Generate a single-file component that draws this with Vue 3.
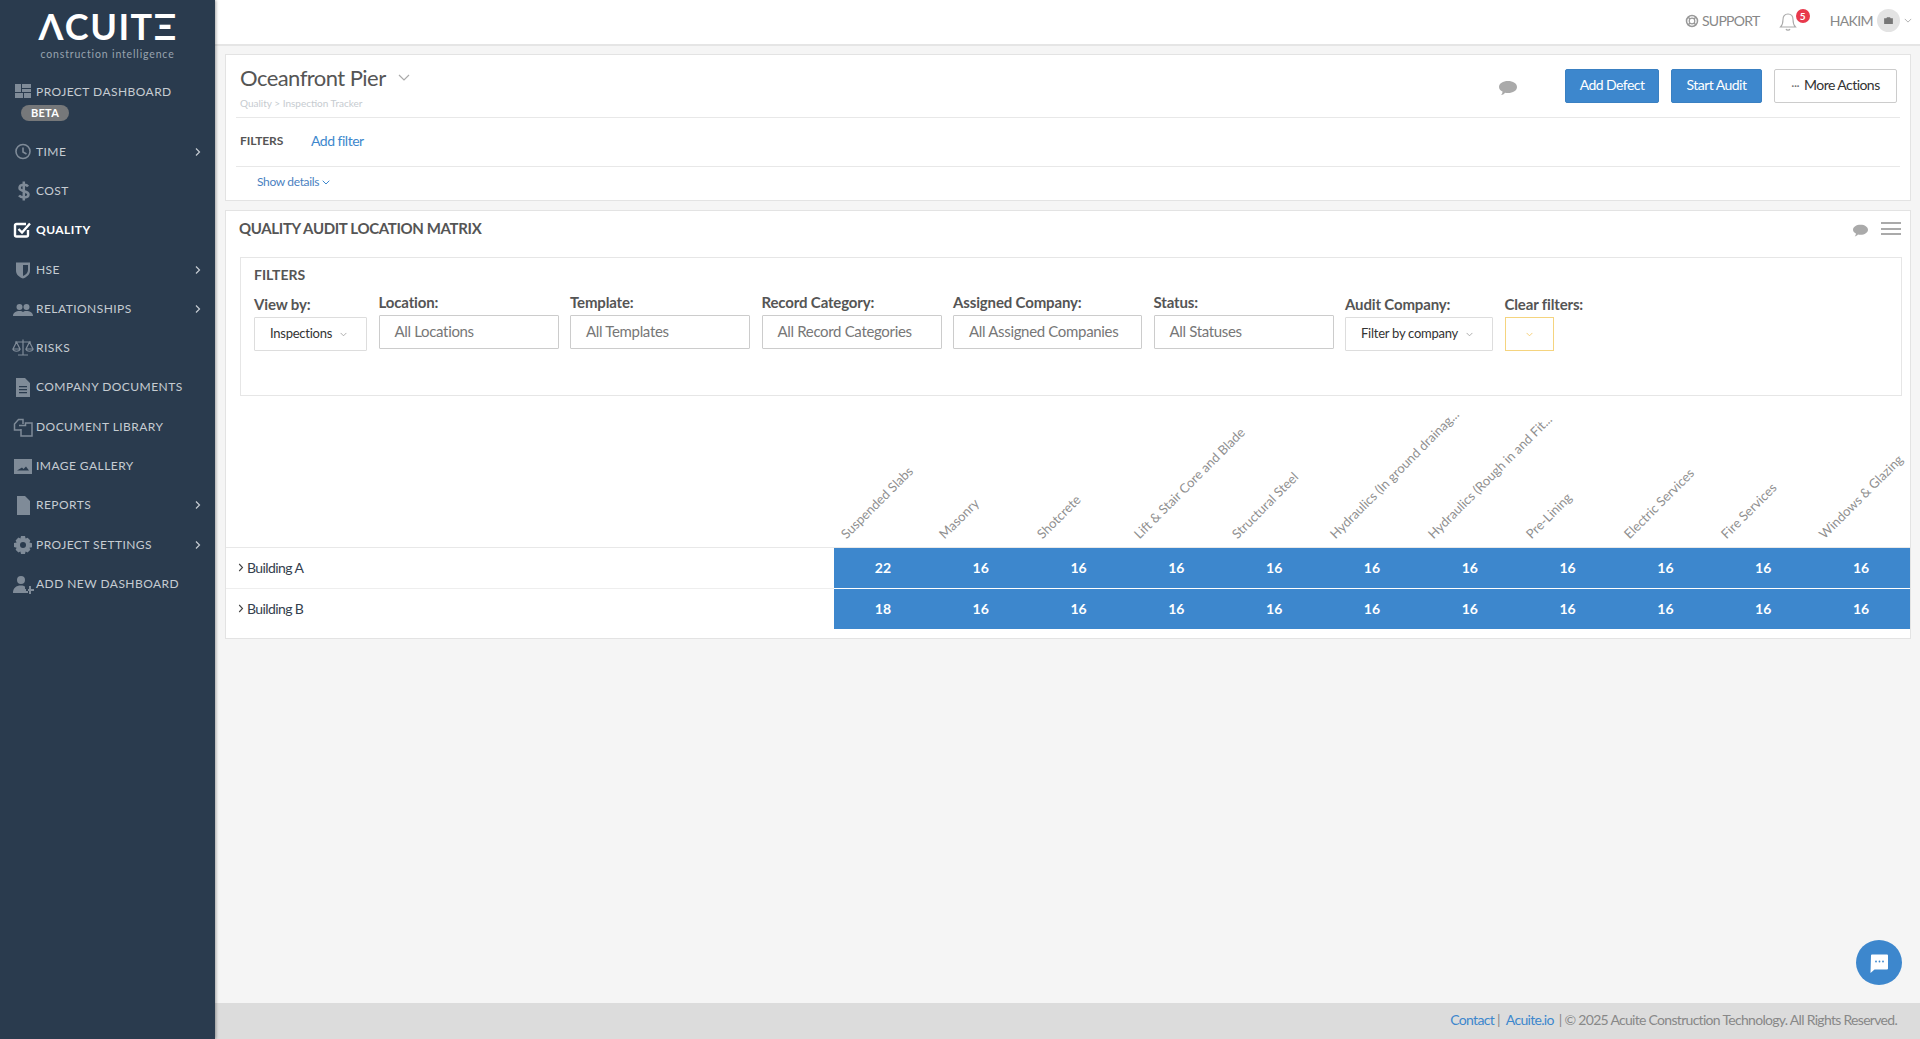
<script setup>
const nav = [
  { label: 'PROJECT DASHBOARD', icon: 'dash', beta: true },
  { label: 'TIME', icon: 'clock', arrow: true },
  { label: 'COST', icon: 'dollar' },
  { label: 'QUALITY', icon: 'check', active: true },
  { label: 'HSE', icon: 'shield', arrow: true },
  { label: 'RELATIONSHIPS', icon: 'people', arrow: true },
  { label: 'RISKS', icon: 'scale' },
  { label: 'COMPANY DOCUMENTS', icon: 'doc' },
  { label: 'DOCUMENT LIBRARY', icon: 'copy' },
  { label: 'IMAGE GALLERY', icon: 'image' },
  { label: 'REPORTS', icon: 'file', arrow: true },
  { label: 'PROJECT SETTINGS', icon: 'gear', arrow: true },
  { label: 'ADD NEW DASHBOARD', icon: 'adduser' }
]
const icons = {
  dash: { f: 'M3 3h6v8H3zM10 3h9v4h-9zM10 8h9v3h-9zM3 12h8v5H3zM12 12h7v5h-7z' },
  clock: { s: 'M11 3.500a7 7 0 1 0 0 14a7 7 0 0 0 0-14zM11 6.500V11l3.500 2', w: 1.600 },
  dollar: { s: 'M16 6.500C14.500 4 7.500 4 7.500 8c0 4 9 2.500 9 6.500c0 4-7.500 3.500-9.500 1M11.800 1.500v19', w: 2.500 },
  check: { s: 'M16 11v5a1.500 1.500 0 0 1-1.500 1.500h-10A1.500 1.500 0 0 1 3 16V6.500A1.500 1.500 0 0 1 4.500 5H14M6.500 10l3.500 3.500l8-9', w: 2.400 },
  shield: { f: 'M4 3.500h14v8c0 4-3 6.500-7 8c-4-1.500-7-4-7-8zM11 6v11c2.500-1 5-3 5-6V6z' },
  people: { f: 'M7.500 6a3 3 0 1 1 0 6a3 3 0 0 1 0-6zM14.500 6a3 3 0 1 1 0 6a3 3 0 0 1 0-6zM1 18c0-3.500 3-5 6.500-5c2 0 3 .5 3.500 1c.5-.5 1.500-1 3.500-1c3.500 0 6.500 1.500 6.500 5z' },
  scale: { s: 'M11 2.500v15M6 18h10M3 5h16M4.500 5L1 12h7zM17.500 5L14 12h7zM1 12c.5 3 6.500 3 7 0M14 12c.5 3 6.500 3 7 0', w: 1.200 },
  doc: { f: 'M4 2h9l5 5v14H4zM7 10h8v1.300H7zM7 13h8v1.300H7zM7 16h8v1.300H7z' },
  copy: { s: 'M9 14H2.500V8l4-4.500H11V8M7 9.500h6.500V7l4 0H20v13H9V13', w: 1.500 },
  image: { f: 'M2 4h18v15H2zM5 15.500h12l-3-4l-2.500 2.500l-1.500-1.500z' },
  file: { f: 'M5 2h8l5 5v14H5z' },
  gear: { f: 'M9 2h4l.6 2.600l2-.8l2.800 2.800l-1 2l2.600.6v4l-2.600.6l1 2l-2.800 2.800l-2-1L13 20H9l-.6-2.400l-2 1L3.600 15.800l1-2L2 13V9l2.600-.6l-1-2L6.400 3.600l2 .8zM11 8a3 3 0 1 0 0 6a3 3 0 0 0 0-6z' },
  adduser: { f: 'M9 3a4 4 0 1 1 0 8a4 4 0 0 1 0-8zM1 20c0-5 3-7.500 8-7.500c2 0 3 .5 4 1v2.500h3v4zM17 13h2v3h3v2h-3v3h-2v-3h-3v-2h3z' }
}
const filters = [
  { label: 'View by:', value: 'Inspections', kind: 'select', width: 113 },
  { label: 'Location:', value: 'All Locations', kind: 'input', width: 180 },
  { label: 'Template:', value: 'All Templates', kind: 'input', width: 180 },
  { label: 'Record Category:', value: 'All Record Categories', kind: 'input', width: 180 },
  { label: 'Assigned Company:', value: 'All Assigned Companies', kind: 'input', width: 189 },
  { label: 'Status:', value: 'All Statuses', kind: 'input', width: 180 },
  { label: 'Audit Company:', value: 'Filter by company', kind: 'select', width: 148 },
  { label: 'Clear filters:', value: '', kind: 'clear', width: 49 }
]
const columns = ['Suspended Slabs', 'Masonry', 'Shotcrete', 'Lift & Stair Core and Blade', 'Structural Steel', 'Hydraulics (In ground drainag...', 'Hydraulics (Rough in and Fit...', 'Pre-Lining', 'Electric Services', 'Fire Services', 'Windows & Glazing']
const rows = [
  { name: 'Building A', values: [22, 16, 16, 16, 16, 16, 16, 16, 16, 16, 16] },
  { name: 'Building B', values: [18, 16, 16, 16, 16, 16, 16, 16, 16, 16, 16] }
]
</script>

<template>
  <div class="app">
    <aside class="sidebar">
      <div class="logo">
        <div class="logo-word" aria-label="ACUITE">ΛCUITΞ</div>
        <div class="logo-sub">construction intelligence</div>
      </div>
      <nav class="nav">
        <div v-for="item in nav" :key="item.label" class="nav-item" :class="{ active: item.active, tall: item.beta }">
          <div class="nav-line">
            <svg class="nav-icon" viewBox="0 0 22 22">
              <path v-if="icons[item.icon].f" :d="icons[item.icon].f" fill="currentColor" fill-rule="evenodd" />
              <path v-if="icons[item.icon].s" :d="icons[item.icon].s" fill="none" stroke="currentColor" :stroke-width="icons[item.icon].w || 2" />
            </svg>
            <span class="nav-label">{{ item.label }}</span>
            <svg v-if="item.arrow" class="nav-arrow" viewBox="0 0 8 10"><path d="M2 1.500l3.500 3.500l-3.500 3.500" fill="none" stroke="currentColor" stroke-width="1.200" /></svg>
          </div>
          <span v-if="item.beta" class="beta">BETA</span>
        </div>
      </nav>
    </aside>

    <div class="main">
      <header class="topbar">
        <span class="top-link">
          <svg class="top-icon" viewBox="0 0 14 14"><circle cx="7" cy="7" r="5.500" fill="none" stroke="#999" stroke-width="1.500" /><circle cx="7" cy="7" r="2.800" fill="none" stroke="#999" stroke-width="1.200" /><path d="M3 3l2 2M11 3L9 5M3 11l2-2M11 11L9 9" stroke="#999" stroke-width="1.500" /></svg>
          SUPPORT
        </span>
        <span class="bell-wrap">
          <svg class="bell" viewBox="0 0 18 20"><path d="M9 2c-3.500 0-5 2.500-5 5.500c0 4-1 6-2.500 7.500h15c-1.500-1.500-2.500-3.500-2.500-7.500C14 4.500 12.500 2 9 2zM7 17c.5 1.500 3.500 1.500 4 0" fill="none" stroke="#aaa" stroke-width="1.100" /></svg>
          <span class="badge">5</span>
        </span>
        <span class="user">HAKIM</span>
        <span class="avatar">
          <svg viewBox="0 0 10 8" width="9" height="7"><path d="M0 1.500h2.500L3.300.300h3.400l.8 1.200H10V8H0z" fill="#777" /></svg>
        </span>
        <svg class="user-caret" viewBox="0 0 10 6"><path d="M1 1l4 4l4-4" fill="none" stroke="#aaa" stroke-width="1.100" /></svg>
      </header>

      <main class="content">
        <section class="panel head-panel">
          <div class="title-row">
            <div class="title-text">
              <div class="title-line">
                <h1>Oceanfront Pier</h1>
                <svg class="title-caret" viewBox="0 0 12 7"><path d="M1 1l5 5l5-5" fill="none" stroke="#aaa" stroke-width="1.200" /></svg>
              </div>
              <div class="crumbs">Quality &gt; Inspection Tracker</div>
            </div>
            <div class="actions">
              <svg class="bubble" viewBox="0 0 18 14"><path d="M9 0c5 0 9 2.500 9 6s-4 6-9 6c-1 0-2-.1-3-.3C5 13 3.500 14 2 14c1-1 1.500-2 1.500-3.500C1.500 9.500 0 8 0 6c0-3.500 4-6 9-6z" fill="#aaa" /></svg>
              <button class="btn primary add">Add Defect</button>
              <button class="btn primary start">Start Audit</button>
              <button class="btn ghost"><span class="dots">···</span>More Actions</button>
            </div>
          </div>
          <div class="filter-row">
            <span class="filter-title">FILTERS</span>
            <a class="add-filter">Add filter</a>
          </div>
          <div class="details-row">
            <a class="details">Show details
              <svg class="details-caret" viewBox="0 0 8 5"><path d="M.700.700L4 4l3.300-3.300" fill="none" stroke="#3d87cd" stroke-width="1" /></svg>
            </a>
          </div>
        </section>

        <section class="panel matrix-panel">
          <div class="matrix-head">
            <h2>QUALITY AUDIT LOCATION MATRIX</h2>
            <div class="matrix-tools">
              <svg class="bubble small" viewBox="0 0 18 14"><path d="M9 0c5 0 9 2.500 9 6s-4 6-9 6c-1 0-2-.1-3-.3C5 13 3.500 14 2 14c1-1 1.500-2 1.500-3.500C1.500 9.500 0 8 0 6c0-3.500 4-6 9-6z" fill="#aaa" /></svg>
              <div class="hamburger"><i></i><i></i><i></i></div>
            </div>
          </div>

          <div class="filter-box">
            <div class="filter-box-title">FILTERS</div>
            <div class="filter-grid">
              <div v-for="f in filters" :key="f.label" class="field" :class="'field-' + f.kind" :style="{ width: f.width + 'px' }">
                <label>{{ f.label }}</label>
                <div v-if="f.kind === 'input'" class="input">{{ f.value }}</div>
                <div v-else-if="f.kind === 'select'" class="select">
                  {{ f.value }}
                  <svg class="select-caret" viewBox="0 0 8 5"><path d="M.700.700L4 4l3.300-3.300" fill="none" stroke="#999" stroke-width=".9" /></svg>
                </div>
                <div v-else class="clear">
                  <svg class="select-caret" viewBox="0 0 8 5"><path d="M.700.700L4 4l3.300-3.300" fill="none" stroke="#f4c65c" stroke-width=".9" /></svg>
                </div>
              </div>
            </div>
          </div>

          <div class="matrix">
            <div class="m-row m-header">
              <div class="m-name"></div>
              <div class="m-cells">
                <div v-for="c in columns" :key="c" class="m-col"><span class="m-rot">{{ c }}</span></div>
              </div>
            </div>
            <div v-for="r in rows" :key="r.name" class="m-row m-body">
              <div class="m-name">
                <svg class="row-caret" viewBox="0 0 6 9"><path d="M1.200 1l3.300 3.500L1.200 8" fill="none" stroke="#444" stroke-width="1.100" /></svg>
                {{ r.name }}
              </div>
              <div class="m-cells">
                <div v-for="(v, i) in r.values" :key="i" class="m-cell">{{ v }}</div>
              </div>
            </div>
          </div>
        </section>
      </main>

      <footer class="footer">
        <a>Contact</a><span class="sep">|</span><a class="second">Acuite.io</a><span class="sep sep-last">|</span><span>© 2025 Acuite Construction Technology. All Rights Reserved.</span>
      </footer>
    </div>

    <button class="chat" aria-label="Chat">
      <svg viewBox="0 0 20 20" width="20" height="20"><path d="M2 2.500a1 1 0 0 1 1-1h15a1 1 0 0 1 1 1v13a1 1 0 0 1-1 1H5.500L1.500 20z" fill="#fff" /><circle cx="7" cy="8.500" r=".9" fill="#3d87cd" /><circle cx="10.500" cy="8.500" r=".9" fill="#3d87cd" /><circle cx="14" cy="8.500" r=".9" fill="#3d87cd" /></svg>
    </button>
  </div>
</template>

<style>
html, body { margin: 0; padding: 0; background: #f5f5f5; }
</style>

<style scoped>
* { box-sizing: border-box; }
.app {
  display: flex;
  width: 100%;
  height: 100vh;
  min-height: 1039px;
  overflow: hidden;
  font-family: Lato, "Noto Sans", sans-serif;
  font-size: 14px;
  color: #555;
  background: #f5f5f5;
}
.sidebar {
  flex: 0 0 215px;
  background: #2a3b4e;
  box-shadow: 1px 0 3px rgba(0, 0, 0, .35);
  z-index: 2;
}
.logo { height: 72px; padding-top: 5px; text-align: center; }
.logo-word {
  font-family: Lato, "Open Sans", sans-serif;
  font-weight: 700;
  font-size: 36px;
  line-height: 43px;
  color: #fff;
  letter-spacing: 1.500px;
  margin-left: 1px;
}
.logo-sub { font-size: 10.500px; line-height: 12px; margin-top: 0; color: #98a3af; letter-spacing: .85px; }
.nav-item { height: 39.300px; padding-left: 12px; display: flex; flex-direction: column; justify-content: center; color: #c6ccd2; }
.nav-item.tall { height: 60px; justify-content: flex-start; padding-top: 10px; }
.nav-line { display: flex; align-items: center; height: 20px; }
.nav-icon { width: 22px; height: 22px; color: #7f8b98; flex: 0 0 22px; margin-right: 2px; }
.nav-label { font-size: 12px; letter-spacing: .45px; line-height: 20px; flex: 1; font-weight: 400; }
.nav-arrow { width: 8px; height: 10px; margin-right: 13px; color: #c6ccd2; }
.active .nav-icon { color: #fff; }
.active .nav-label { color: #fff; font-weight: 700; }
.beta {
  display: inline-block;
  align-self: flex-start;
  margin: 3px 0 0 9px;
  width: 48px;
  height: 16px;
  border-radius: 8px;
  background: #76787a;
  color: #fff;
  font-size: 11px;
  font-weight: 700;
  line-height: 15px;
  text-align: center;
  letter-spacing: .3px;
}
.main { flex: 1; min-width: 0; display: flex; flex-direction: column; }
.topbar {
  height: 46px;
  flex: 0 0 46px;
  background: #fff;
  border-bottom: 2px solid #e5e5e5;
  display: flex;
  align-items: center;
  justify-content: flex-end;
  padding: 0 8px 3px 0;
  color: #888;
}
.top-link { display: flex; align-items: center; gap: 3px; font-size: 14px; letter-spacing: -.7px; margin-right: 19px; }
.top-icon { width: 14px; height: 14px; }
.bell-wrap { display: flex; align-items: flex-start; margin-right: 20px; position: relative; width: 31px; height: 24px; }
.bell { width: 18px; height: 20px; margin-top: 3px; }
.badge {
  position: absolute;
  top: 0;
  left: 17px;
  width: 14px;
  height: 14px;
  border-radius: 50%;
  background: #e8394c;
  color: #fff;
  font-size: 10px;
  font-weight: 700;
  line-height: 14px;
  text-align: center;
}
.user { font-size: 14px; letter-spacing: -.6px; margin-right: 4px; }
.avatar { width: 23px; height: 23px; border-radius: 50%; background: #e3e3e3; display: flex; align-items: center; justify-content: center; }
.user-caret { width: 8px; height: 5px; margin-left: 4px; }
.content { flex: 1; min-height: 0; padding: 8px 9px 0 10px; }
.panel { background: #fff; border: 1px solid #e3e3e3; }
.head-panel { height: 147px; display: flex; flex-direction: column; }
.title-row { height: 63px; margin: 0 10px; border-bottom: 1px solid #e8e8e8; padding: 0 0 0 4px; display: flex; justify-content: space-between; }
.title-text { padding-top: 8px; }
.title-line { display: flex; align-items: center; height: 29px; }
h1 { margin: 0; font-size: 22px; font-weight: 400; color: #555; line-height: 29px; letter-spacing: -.55px; }
.title-caret { width: 12px; height: 7px; margin-left: 12px; }
.crumbs { font-size: 10px; color: #c6cbd0; margin-top: 5px; line-height: 13px; }
.actions { display: flex; align-items: flex-start; padding-top: 14px; }
.bubble { width: 18px; height: 14px; margin: 12px 48px 0 0; }
.btn { height: 34px; font: inherit; font-size: 14px; letter-spacing: -.55px; border-radius: 2px; cursor: pointer; padding: 0 0 3px; }
.primary { background: #3d87cd; border: 1px solid #3a80c2; color: #fff; }
.add { width: 94px; margin-right: 12px; }
.start { width: 91px; margin-right: 12px; }
.ghost { width: 123px; background: #fff; border: 1px solid #ccc; color: #333; margin-right: 3px; }
.dots { color: #777; margin-right: 5px; font-size: 12px; }
.filter-row { height: 49px; margin: 0 10px; padding: 0 0 3px 4px; border-bottom: 1px solid #e8e8e8; display: flex; align-items: center; }
.filter-title { font-size: 12px; font-weight: 700; color: #555; width: 71px; letter-spacing: -.1px; }
.add-filter { color: #3d87cd; font-size: 14px; letter-spacing: -.5px; }
.details-row { padding: 5px 0 0 31px; }
.details { color: #4a7fc1; font-size: 12px; line-height: 16px; letter-spacing: -.35px; }
.details-caret { width: 8px; height: 5px; vertical-align: 1px; }
.matrix-panel { margin-top: 9px; height: 429px; }
.matrix-head { height: 46px; padding: 7px 9px 0 13px; display: flex; justify-content: space-between; align-items: flex-start; }
h2 { margin: 0; font-size: 15px; font-weight: 700; color: #555; line-height: 20px; letter-spacing: -.35px; }
.matrix-tools { display: flex; align-items: flex-start; }
.bubble.small { width: 15px; height: 15px; margin: 5px 13px 0 0; }
.hamburger { width: 20px; display: flex; flex-direction: column; gap: 3.500px; margin-top: 4px; }
.hamburger i { display: block; height: 2px; background: #aaa; }
.filter-box { height: 139px; margin: 0 8px 0 14px; border: 1px solid #e6e6e6; padding: 8px 13px; }
.filter-box-title { font-size: 14px; font-weight: 700; color: #555; line-height: 18px; }
.filter-grid { display: flex; align-items: flex-start; gap: 11.500px; margin-top: 9px; }
.field { flex: none; }
.field label { display: block; font-size: 15px; letter-spacing: -.15px; font-weight: 700; color: #555; line-height: 18px; white-space: nowrap; }
.field-select, .field-clear { padding-top: 2px; }
.field-select label, .field-clear label { margin-bottom: 4px; }
.field-input label { margin-bottom: 4px; }
.input { height: 34px; border: 1px solid #ccc; border-radius: 1px; padding-left: 15px; line-height: 30px; color: #777; font-size: 15px; letter-spacing: -.33px; white-space: nowrap; }
.select { height: 34px; border: 1px solid #ddd; border-radius: 1px; padding-left: 15px; line-height: 31px; color: #333; font-size: 13px; letter-spacing: -.25px; white-space: nowrap; }
.select-caret { width: 7px; height: 5px; margin-left: 5px; vertical-align: 1px; }
.clear { height: 34px; border: 1px solid #f5d47f; display: flex; align-items: center; justify-content: center; }
.clear .select-caret { margin: 0; }
.m-row { display: flex; }
.m-name { flex: 0 0 608px; }
.m-cells { flex: 1; display: flex; min-width: 0; }
.m-header { height: 152px; border-bottom: 1px solid #e8e8e8; }
.m-col { flex: 1; height: 151px; position: relative; }
.m-rot {
  position: absolute;
  left: 14px;
  bottom: 6px;
  transform-origin: left bottom;
  transform: rotate(-45deg);
  font-size: 13px;
  color: #8f8f8f;
  white-space: nowrap;
  line-height: 14px;
}
.m-body { height: 41px; }
.m-body + .m-body { height: 40px; }
.m-body .m-name {
  display: flex;
  align-items: center;
  gap: 3px;
  padding-left: 12px;
  padding-bottom: 1px;
  font-size: 14px;
  letter-spacing: -.6px;
  color: #34404e;
  border-bottom: 1px solid #eee;
}
.m-body + .m-body .m-name { border-bottom: none; padding-bottom: 2px; }
.row-caret { width: 6px; height: 9px; }
.m-body .m-cells { background: #3d87cd; border-bottom: 1px solid #fff; }
.m-body + .m-body .m-cells { border-bottom: none; }
.m-cell { padding-bottom: 1px; }
.m-body + .m-body .m-cell { padding-bottom: 2px; }
.m-cell { flex: 1; display: flex; align-items: center; justify-content: center; color: #fff; font-size: 14px; font-weight: 700; }
.footer {
  flex: 0 0 36px;
  height: 36px;
  background: #dcdcdc;
  display: flex;
  justify-content: flex-end;
  align-items: center;
  padding: 0 23px 4px 0;
  font-size: 14px;
  letter-spacing: -.7px;
  color: #888;
  white-space: pre;
}
.footer a { color: #3d87cd; }
.sep { margin: 0 3px; }
.sep-last { margin-left: 5px; }
.second { margin-left: 3px; }
.chat {
  position: fixed;
  left: 1856px;
  top: 940px;
  width: 46px;
  height: 45px;
  border: none;
  border-radius: 50%;
  background: #3d87cd;
  padding: 0;
  display: flex;
  align-items: center;
  justify-content: center;
}
</style>
